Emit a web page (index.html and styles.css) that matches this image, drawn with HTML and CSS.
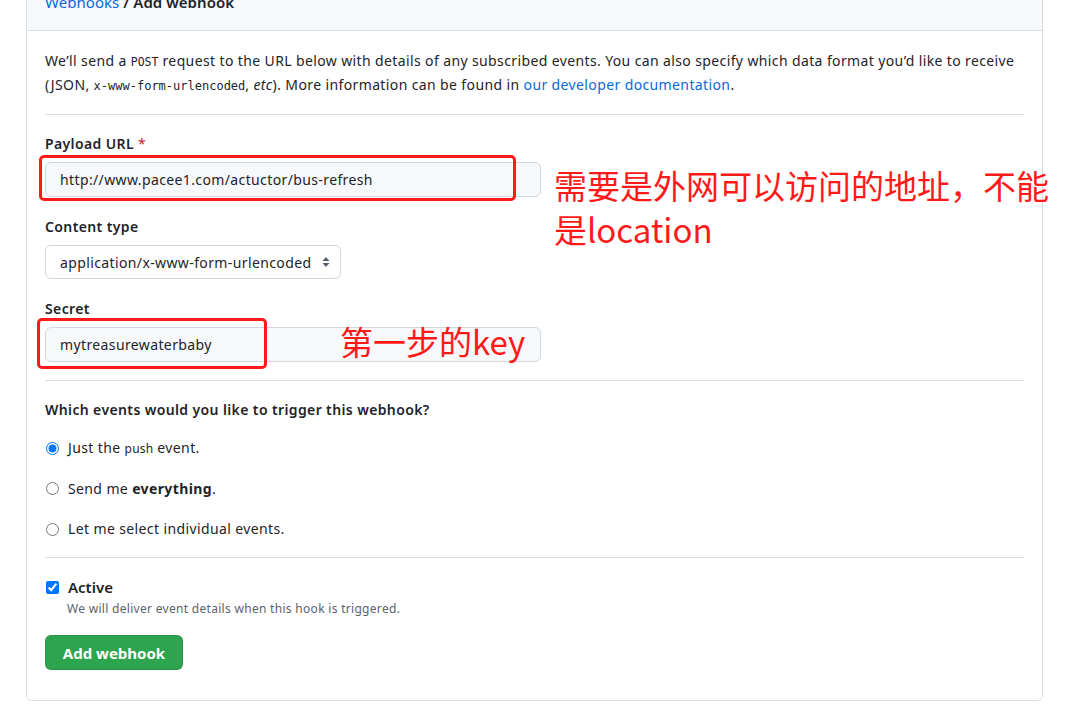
FILE: index.html
```html
<!DOCTYPE html>
<html lang="zh-CN">
<head>
<meta charset="utf-8">
<title>Add webhook</title>
<link rel="stylesheet" href="styles.css">
</head>
<body>
<div class="page">
  <div class="card">
    <div class="card-header">
      <a class="crumb-link" href="#">Webhooks</a> / <span class="crumb-current">Add webhook</span>
    </div>
    <div class="card-body">
      <p class="intro">We’ll send a <code class="small-code">POST</code> request to the URL below with details of any subscribed events. You can also specify which data format you’d like to receive (JSON, <code>x-www-form-urlencoded</code>, <em>etc</em>). More information can be found in <a href="#">our developer documentation</a>.</p>
      <hr class="divider">
      <div class="field">
        <label class="label">Payload URL <span class="req">*</span></label>
        <input class="text-input" type="text" value="http://www.pacee1.com/actuctor/bus-refresh">
      </div>
      <div class="field">
        <label class="label">Content type</label>
        <div class="select">
          <span>application/x-www-form-urlencoded</span>
          <svg class="select-arrows" width="8" height="12" viewBox="0 0 8 12"><path d="M4 1 L7.5 5 H0.5 Z M4 11 L0.5 7 H7.5 Z" fill="#57606a"/></svg>
        </div>
      </div>
      <div class="field field-last">
        <label class="label">Secret</label>
        <input class="text-input" type="text" value="mytreasurewaterbaby">
      </div>
      <hr class="divider divider-b">
      <h3 class="question">Which events would you like to trigger this webhook?</h3>
      <div class="radios">
        <label class="radio"><input type="radio" name="ev" checked> <span>Just the <code class="push">push</code> event.</span></label>
        <label class="radio"><input type="radio" name="ev"> <span>Send me <strong>everything</strong>.</span></label>
        <label class="radio"><input type="radio" name="ev"> <span>Let me select individual events.</span></label>
      </div>
      <hr class="divider divider-c">
      <div class="active">
        <label class="check"><input type="checkbox" checked> <strong>Active</strong></label>
        <p class="note">We will deliver event details when this hook is triggered.</p>
      </div>
      <button class="btn" type="button">Add webhook</button>

      <div class="mark mark-url"></div>
      <div class="mark mark-secret"></div>
      <div class="note-red note-url">需要是外网可以访问的地址，不能是location</div>
      <div class="note-red note-key">第一步的key</div>
    </div>
  </div>
</div>
</body>
</html>
```

FILE: styles.css
```css
html, body {
  margin: 0;
  padding: 0;
  background: #ffffff;
  overflow: hidden;
}
body {
  font-family: "Noto Sans", "Liberation Sans", sans-serif;
  font-size: 14px;
  letter-spacing: 0.38px;
  color: #1f2328;
}
.page {
  padding: 0 42px 0 26px;
}
.card {
  margin-top: -27px;
  border: 1px solid #d8dee4;
  border-radius: 6px;
  width: 1015px;
}
.card-header {
  background: #f6f8fa;
  border-bottom: 1px solid #d8dee4;
  padding: 16px 18px;
  font-size: 15px;
  line-height: 24px;
  font-weight: 600;
  letter-spacing: 0.05px;
  color: #1f2328;
  border-radius: 6px 6px 0 0;
}
.crumb-link {
  color: #0969da;
  text-decoration: none;
  font-weight: 400;
}
.card-body {
  position: relative;
  padding: 18px 18px 30px 18px;
}
.intro {
  margin: 0;
  line-height: 24px;
}
.intro a {
  color: #0969da;
  text-decoration: none;
}
code {
  font-family: "DejaVu Sans Mono", "Liberation Mono", monospace;
  font-size: 12px;
  line-height: 1;
  letter-spacing: 0;
}
.small-code {
  font-size: 11.5px;
}
.divider {
  border: 0;
  border-top: 1px solid #d8dee4;
  margin: 17px 0 19px 0;
  height: 0;
}
.divider-b {
  margin: 18px 0 19px 0;
}
.divider-c {
  margin: 18px 0 19px 0;
}
.field {
  display: flex;
  flex-direction: column;
  gap: 8px;
  margin-bottom: 20px;
}
.field-last {
  margin-bottom: 0;
}
.label {
  font-weight: 600;
  line-height: 20px;
}
.req {
  color: #cf222e;
  font-weight: 400;
}
.text-input {
  box-sizing: border-box;
  width: 496px;
  height: 35px;
  padding: 0 14px;
  border: 1px solid #d0d7de;
  border-radius: 6px;
  background: #f6f8fa;
  font-family: inherit;
  font-size: 14px;
  letter-spacing: 0.38px;
  color: #1f2328;
  outline: none;
}
.select {
  box-sizing: border-box;
  width: 296px;
  height: 34px;
  padding: 0 10px 0 14px;
  border: 1px solid #d0d7de;
  border-radius: 6px;
  background: #ffffff;
  display: flex;
  align-items: center;
  justify-content: space-between;
}
.select-arrows {
  flex: none;
}
.question {
  margin: 0 0 18px 0;
  font-size: 14px;
  line-height: 20px;
  font-weight: 600;
}
.radios {
  display: flex;
  flex-direction: column;
  gap: 20.5px;
}
.radio, .check {
  display: flex;
  align-items: center;
  gap: 6px;
  line-height: 20px;
}
.radio input, .check input {
  margin: 0 3px 0 1px;
  width: 13px;
  height: 13px;
  accent-color: #0075ff;
}
.push {
  font-family: "Noto Sans", sans-serif;
  font-size: 12px;
  letter-spacing: 0.2px;
}
.check strong {
  font-size: 15px;
  font-weight: 600;
  letter-spacing: 0;
}
.note {
  margin: 3px 0 0 22px;
  font-size: 12px;
  line-height: 18px;
  letter-spacing: 0.3px;
  color: #59636e;
}
.btn {
  margin-top: 17px;
  height: 35px;
  width: 138px;
  border: 1px solid rgba(31, 35, 40, 0.15);
  border-radius: 6px;
  background: #2da44e;
  color: #ffffff;
  font-family: inherit;
  font-size: 15px;
  font-weight: 700;
  letter-spacing: 0;
  display: block;
}
.mark {
  position: absolute;
  border: 3px solid #ff1a1a;
  border-radius: 5px;
  box-sizing: border-box;
}
.mark-url {
  left: 12px;
  top: 124px;
  width: 477px;
  height: 46px;
}
.mark-secret {
  left: 10px;
  top: 287px;
  width: 230px;
  height: 51px;
}
.note-red {
  position: absolute;
  color: #ff1a1a;
  font-family: "Noto Sans CJK SC", "Noto Sans", sans-serif;
  font-size: 33px;
  line-height: 44px;
  letter-spacing: 0;
}
.note-url {
  left: 527px;
  top: 132px;
  width: 500px;
}
.note-key {
  left: 313px;
  top: 288px;
  white-space: nowrap;
}
```
